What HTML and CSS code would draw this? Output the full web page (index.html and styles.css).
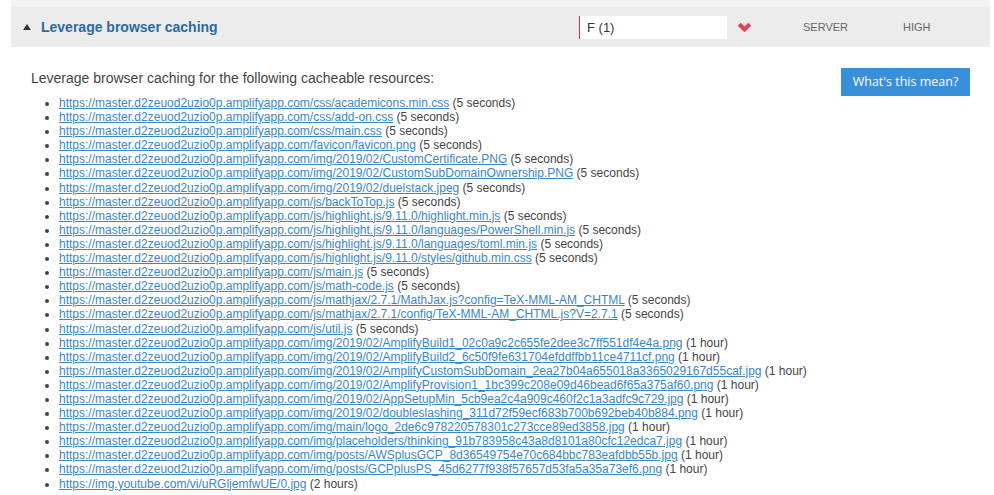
FILE: index.html
```html
<!DOCTYPE html>
<html lang="en">
<head>
    <meta charset="UTF-8">
    <title>Leverage browser caching</title>
    <link rel="stylesheet" href="styles.css">
</head>
<body>
    <div class="report">
        <div class="prev-row"></div>
        <div class="rule-header">
            <div class="toggle">
                <svg width="8" height="6" viewBox="0 0 8 6"><polygon points="4,0 8,6 0,6" fill="#333"/></svg>
            </div>
            <div class="rule-title">Leverage browser caching</div>
            <div class="grade">F (1)</div>
            <div class="trend">
                <svg width="15" height="10" viewBox="0 0 15 10"><polyline points="2.2,2.2 7.5,7.3 12.8,2.2" fill="none" stroke="#e0435a" stroke-width="4.2" stroke-linejoin="miter"/></svg>
            </div>
            <div class="rule-type">SERVER</div>
            <div class="rule-priority">HIGH</div>
        </div>
        <div class="rule-body">
            <div class="body-top">
                <p class="summary">Leverage browser caching for the following cacheable resources:</p>
                <a class="help-button" href="#">What's this mean?</a>
            </div>
            <ul class="resources">
                <li><a href="#">https://master.d2zeuod2uzio0p.amplifyapp.com/css/academicons.min.css</a> (5 seconds)</li>
                <li><a href="#">https://master.d2zeuod2uzio0p.amplifyapp.com/css/add-on.css</a> (5 seconds)</li>
                <li><a href="#">https://master.d2zeuod2uzio0p.amplifyapp.com/css/main.css</a> (5 seconds)</li>
                <li><a href="#">https://master.d2zeuod2uzio0p.amplifyapp.com/favicon/favicon.png</a> (5 seconds)</li>
                <li><a href="#">https://master.d2zeuod2uzio0p.amplifyapp.com/img/2019/02/CustomCertificate.PNG</a> (5 seconds)</li>
                <li><a href="#">https://master.d2zeuod2uzio0p.amplifyapp.com/img/2019/02/CustomSubDomainOwnership.PNG</a> (5 seconds)</li>
                <li><a href="#">https://master.d2zeuod2uzio0p.amplifyapp.com/img/2019/02/duelstack.jpeg</a> (5 seconds)</li>
                <li><a href="#">https://master.d2zeuod2uzio0p.amplifyapp.com/js/backToTop.js</a> (5 seconds)</li>
                <li><a href="#">https://master.d2zeuod2uzio0p.amplifyapp.com/js/highlight.js/9.11.0/highlight.min.js</a> (5 seconds)</li>
                <li><a href="#">https://master.d2zeuod2uzio0p.amplifyapp.com/js/highlight.js/9.11.0/languages/PowerShell.min.js</a> (5 seconds)</li>
                <li><a href="#">https://master.d2zeuod2uzio0p.amplifyapp.com/js/highlight.js/9.11.0/languages/toml.min.js</a> (5 seconds)</li>
                <li><a href="#">https://master.d2zeuod2uzio0p.amplifyapp.com/js/highlight.js/9.11.0/styles/github.min.css</a> (5 seconds)</li>
                <li><a href="#">https://master.d2zeuod2uzio0p.amplifyapp.com/js/main.js</a> (5 seconds)</li>
                <li><a href="#">https://master.d2zeuod2uzio0p.amplifyapp.com/js/math-code.js</a> (5 seconds)</li>
                <li><a href="#">https://master.d2zeuod2uzio0p.amplifyapp.com/js/mathjax/2.7.1/MathJax.js?config=TeX-MML-AM_CHTML</a> (5 seconds)</li>
                <li><a href="#">https://master.d2zeuod2uzio0p.amplifyapp.com/js/mathjax/2.7.1/config/TeX-MML-AM_CHTML.js?V=2.7.1</a> (5 seconds)</li>
                <li><a href="#">https://master.d2zeuod2uzio0p.amplifyapp.com/js/util.js</a> (5 seconds)</li>
                <li><a href="#">https://master.d2zeuod2uzio0p.amplifyapp.com/img/2019/02/AmplifyBuild1_02c0a9c2c655fe2dee3c7ff551df4e4a.png</a> (1 hour)</li>
                <li><a href="#">https://master.d2zeuod2uzio0p.amplifyapp.com/img/2019/02/AmplifyBuild2_6c50f9fe631704efddffbb11ce4711cf.png</a> (1 hour)</li>
                <li><a href="#">https://master.d2zeuod2uzio0p.amplifyapp.com/img/2019/02/AmplifyCustomSubDomain_2ea27b04a655018a3365029167d55caf.jpg</a> (1 hour)</li>
                <li><a href="#">https://master.d2zeuod2uzio0p.amplifyapp.com/img/2019/02/AmplifyProvision1_1bc399c208e09d46bead6f65a375af60.png</a> (1 hour)</li>
                <li><a href="#">https://master.d2zeuod2uzio0p.amplifyapp.com/img/2019/02/AppSetupMin_5cb9ea2c4a909c460f2c1a3adfc9c729.jpg</a> (1 hour)</li>
                <li><a href="#">https://master.d2zeuod2uzio0p.amplifyapp.com/img/2019/02/doubleslashing_311d72f59ecf683b700b692beb40b884.png</a> (1 hour)</li>
                <li><a href="#">https://master.d2zeuod2uzio0p.amplifyapp.com/img/main/logo_2de6c978220578301c273cce89ed3858.jpg</a> (1 hour)</li>
                <li><a href="#">https://master.d2zeuod2uzio0p.amplifyapp.com/img/placeholders/thinking_91b783958c43a8d8101a80cfc12edca7.jpg</a> (1 hour)</li>
                <li><a href="#">https://master.d2zeuod2uzio0p.amplifyapp.com/img/posts/AWSplusGCP_8d36549754e70c684bbc783eafdbb55b.jpg</a> (1 hour)</li>
                <li><a href="#">https://master.d2zeuod2uzio0p.amplifyapp.com/img/posts/GCPplusPS_45d6277f938f57657d53fa5a35a73ef6.png</a> (1 hour)</li>
                <li><a href="#">https://img.youtube.com/vi/uRGljemfwUE/0.jpg</a> (2 hours)</li>
            </ul>
        </div>
    </div>
</body>
</html>
```

FILE: styles.css
```css
body {
    font-family: "Liberation Sans", Arial, sans-serif;
    margin: 0;
    padding: 0;
    background-color: white;
    color: #444;
}
.report {
    padding: 0 4px 0 11px;
}
.prev-row {
    height: 7px;
    background-color: #f3f3f3;
}
.rule-header {
    display: flex;
    align-items: center;
    height: 40px;
    background-color: #ececec;
}
.toggle {
    width: 30px;
    padding-left: 12px;
    box-sizing: border-box;
    display: flex;
    align-items: center;
}
.rule-title {
    flex: 1;
    font-size: 14px;
    font-weight: bold;
    color: #2c6a9f;
}
.grade {
    width: 148px;
    height: 23px;
    line-height: 23px;
    box-sizing: border-box;
    background-color: white;
    border-left: 1px solid #d2343f;
    padding-left: 7px;
    font-size: 13px;
    color: #333;
    margin-right: 10px;
}
.trend {
    width: 16px;
    display: flex;
    align-items: center;
    margin-right: 50px;
}
.rule-type,
.rule-priority {
    font-size: 11px;
    color: #666;
}
.rule-type {
    width: 100px;
}
.rule-priority {
    width: 87px;
}
.rule-body {
    padding: 0 20px 0 20px;
}
.body-top {
    display: flex;
    justify-content: space-between;
    align-items: flex-start;
    padding-top: 21px;
}
.summary {
    margin: 0;
    padding-top: 2px;
    font-size: 14px;
    color: #444;
}
.help-button {
    display: block;
    background-color: #3a8fd9;
    color: white;
    text-decoration: none;
    font-family: "Open Sans", sans-serif;
    font-size: 12.5px;
    width: 129px;
    height: 28px;
    line-height: 28px;
    text-align: center;
}
.resources {
    margin: 0;
    padding-left: 28px;
    font-size: 12px;
    line-height: 14.1px;
}
.resources li {
    color: #444;
}
.resources a {
    color: #3a87c8;
}
```
